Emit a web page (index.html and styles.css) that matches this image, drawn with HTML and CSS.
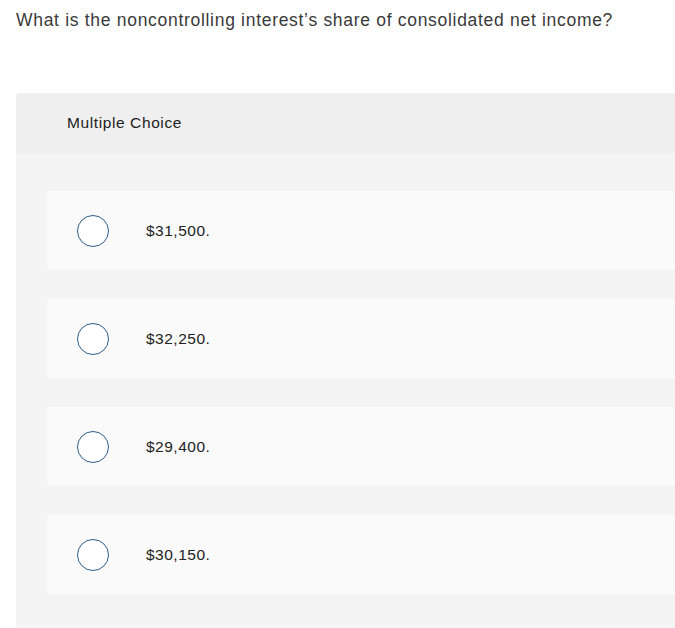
FILE: index.html
```html
<!DOCTYPE html>
<html>
<head>
<meta charset="utf-8">
<link rel="stylesheet" href="styles.css">
</head>
<body>
<p class="question">What is the noncontrolling interest’s share of consolidated net income?</p>
<section class="panel">
  <header class="panel-head">Multiple Choice</header>
  <div class="options">
    <label class="option"><span class="radio"></span><span class="opt-text">$31,500.</span></label>
    <label class="option"><span class="radio"></span><span class="opt-text">$32,250.</span></label>
    <label class="option"><span class="radio"></span><span class="opt-text">$29,400.</span></label>
    <label class="option"><span class="radio"></span><span class="opt-text">$30,150.</span></label>
  </div>
</section>
</body>
</html>
```
FILE: styles.css
```css
html, body {
  margin: 0;
  padding: 0;
  background: #ffffff;
  overflow: hidden;
}
body {
  font-family: "Liberation Sans", Arial, sans-serif;
  color: #333333;
}
.question {
  margin: 0;
  padding: 8px 0 0 16px;
  font-size: 17.5px;
  letter-spacing: 0.7px;
  line-height: 24px;
  color: #3a3a3a;
}
.panel {
  margin: 61px 0 0 16px;
  background: #f4f4f4;
  border-top-left-radius: 4px;
  height: 535px;
}
.panel-head {
  background: #efefef;
  border-top-left-radius: 4px;
  height: 60px;
  display: flex;
  align-items: center;
  padding-left: 51px;
  font-size: 15.5px;
  letter-spacing: 0.6px;
  color: #222;
}
.options {
  padding: 38px 0 0 31px;
  display: flex;
  flex-direction: column;
  gap: 29px;
}
.option {
  height: 79px;
  background: #fafafa;
  border-radius: 4px 0 0 4px;
  display: flex;
  align-items: center;
  padding-left: 30px;
}
.radio {
  width: 30px;
  height: 30px;
  border: 1.5px solid #2f5e8e;
  border-radius: 50%;
  background: #fff;
  flex: none;
}
.opt-text {
  margin-left: 37px;
  font-size: 15.5px;
  letter-spacing: 0.5px;
  color: #222;
}
```
